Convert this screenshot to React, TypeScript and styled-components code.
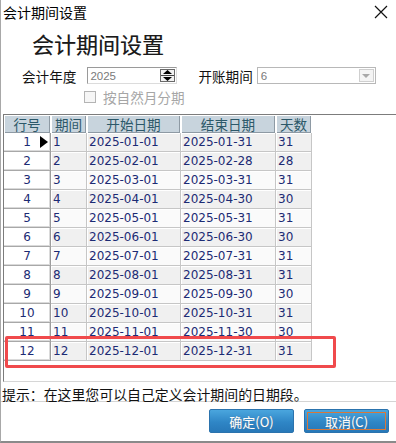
import React from "react";
import styled, { createGlobalStyle } from "styled-components";

const GlobalStyle = createGlobalStyle`
  html, body { margin: 0; padding: 0; background: #ffffff; }
  body { font-family: "Noto Sans CJK SC", "Noto Sans", sans-serif; }
  * { box-sizing: border-box; }
`;

const CJK = `"Noto Sans CJK SC", "Noto Sans", sans-serif`;
const NUM = `"DejaVu Sans", "Noto Sans CJK SC", sans-serif`;

const Window = styled.div`
  position: relative;
  width: 396px;
  height: 443px;
  background: #ffffff;
  border-left: 1px solid #a8a8a8;
  border-bottom: 2px solid #8a8a8a;
  display: flex;
  flex-direction: column;
  overflow: hidden;
`;

const TitleBar = styled.div`
  height: 24px;
  display: flex;
  align-items: center;
  justify-content: space-between;
  padding: 0 8px 0 2px;
  font-family: ${CJK};
  font-size: 14px;
  color: #000;
`;

const CloseIcon = () => (
  <svg width="14" height="14" viewBox="0 0 14 14">
    <path d="M1 1 L13 13 M13 1 L1 13" stroke="#111" strokeWidth="1.2" fill="none" />
  </svg>
);

const BigTitle = styled.div`
  margin: 6px 0 0 31px;
  height: 26px;
  line-height: 26px;
  font-family: ${CJK};
  font-size: 22px;
  color: #1a1a1a;
  text-shadow: 0.3px 0.3px 0 #9a9a9a;
`;

const FormRow = styled.div`
  margin-top: 10px;
  height: 19px;
  display: flex;
  align-items: center;
  padding-left: 21px;
`;

const Label = styled.span<{ $gap: number }>`
  font-family: ${CJK};
  font-size: 13.6px;
  color: #111;
  margin-right: ${(p) => p.$gap}px;
  white-space: nowrap;
`;

const SpinBox = styled.div`
  width: 90px;
  height: 17px;
  border: 1px solid #9a9a9a;
  border-right-color: #dcdcdc;
  border-bottom-color: #dcdcdc;
  background: #fff;
  display: flex;
  align-items: center;
  justify-content: space-between;
  padding: 0 1px 0 2px;
  margin-right: 21px;
`;

const FieldText = styled.span`
  font-family: "Liberation Sans", Arial, sans-serif;
  font-size: 11.5px;
  color: #7a7a7a;
`;

const SpinButtons = styled.div`
  width: 15px;
  height: 13px;
  border: 1px solid #6a6a6a;
  background: #f2f2f2;
  display: flex;
  flex-direction: column;
  align-items: center;
  justify-content: space-around;
`;

const SpinSplit = styled.div`
  width: 13px;
  height: 1px;
  background: #444;
`;

const Combo = styled.div`
  width: 119px;
  height: 17px;
  border: 1px solid #b8b8b8;
  background: #fff;
  display: flex;
  align-items: center;
  justify-content: space-between;
  padding: 0 1px 0 3px;
`;

const ComboButton = styled.div`
  width: 15px;
  height: 13px;
  border: 1px solid #cfcfcf;
  background: #f4f4f4;
  display: flex;
  align-items: center;
  justify-content: center;
`;

const CheckRow = styled.div`
  margin-top: 3px;
  height: 18px;
  display: flex;
  align-items: center;
  padding-left: 83px;
  gap: 7px;
`;

const CheckBox = styled.div`
  width: 12px;
  height: 12px;
  border: 1px solid #b4b4b4;
  background: #f6f6f6;
`;

const CheckLabel = styled.span`
  font-family: ${CJK};
  font-size: 13.6px;
  color: #a6a6a6;
`;

const GridBox = styled.div`
  margin: 8px 0 0 2px;
  height: 268px;
  border-top: 1px solid #7c7c7c;
  border-left: 1px solid #7c7c7c;
  border-bottom: 1px solid #d6d6d6;
  background: #fff;
  display: flex;
  flex-direction: column;
  flex-shrink: 0;
`;

const COLS = "47px 36px 94px 95px 36px";

const HeaderRow = styled.div`
  display: grid;
  grid-template-columns: ${COLS};
  height: 18px;
`;

const HeaderCell = styled.div`
  background: #c8d4dd;
  box-shadow: inset 1px 1px 0 #ffffff, inset -1px -1px 0 #8e9aa4;
  border-right: 1px solid #fff;
  display: flex;
  align-items: center;
  justify-content: center;
  font-family: ${CJK};
  font-size: 13.6px;
  line-height: 17px;
  color: #2c5869;
`;

const DataRow = styled.div`
  display: grid;
  grid-template-columns: ${COLS};
  height: 19px;
`;

const RowNo = styled.div`
  position: relative;
  background: #fff;
  border-right: 1px solid #9c9c9c;
  border-bottom: 1px solid #a8a8a8;
  box-shadow: inset -1px -1px 0 #dadada, inset 1px 1px 0 #ffffff;
  display: flex;
  align-items: center;
  justify-content: center;
  font-family: ${NUM};
  font-size: 12px;
  color: #1c2b74;
`;

const Pointer = styled.span`
  position: absolute;
  right: 2px;
  top: 3px;
  width: 0;
  height: 0;
  border-top: 6px solid transparent;
  border-bottom: 6px solid transparent;
  border-left: 8px solid #000;
`;

const Cell = styled.div<{ $shade: boolean }>`
  background: ${(p) => (p.$shade ? "#f0f0f0" : "#fafafa")};
  border-right: 1px solid #c6c6c6;
  border-bottom: 1px solid #c6c6c6;
  box-shadow: inset 1px 1px 0 #ffffff;
  display: flex;
  align-items: center;
  padding-left: 2px;
  font-family: ${NUM};
  font-size: 12px;
  color: #1c2b74;
  white-space: nowrap;
  overflow: hidden;
`;

const HintBar = styled.div`
  height: 20px;
  display: flex;
  align-items: flex-end;
  padding-left: 1px;
  border-bottom: 1px solid #d4d4d4;
  font-family: ${CJK};
  font-size: 13.9px;
  line-height: 14px;
  color: #111;
  white-space: nowrap;
`;

const Footer = styled.div`
  flex: 1;
  display: flex;
  justify-content: flex-end;
  align-items: flex-start;
  padding: 7px 7px 0 0;
  gap: 10px;
`;

const Button = styled.div<{ $focus?: boolean }>`
  position: relative;
  width: 85px;
  height: 24px;
  flex-shrink: 0;
  border-radius: 2px;
  border: 1px solid #2b73ad;
  background: linear-gradient(#4aa6de, #2f86c6 55%, #2778b8);
  display: flex;
  align-items: center;
  justify-content: center;
  font-family: ${CJK};
  font-size: 13px;
  color: #ffffff;
  text-shadow: 0 0 1px #6a7d8c;
  ${(p) =>
    p.$focus
      ? `&::after { content: ""; position: absolute; left: 2px; top: 2px; right: 2px; bottom: 2px; border: 1px solid #d8783a; }`
      : ""}
`;

const Highlight = styled.div`
  position: absolute;
  left: 4px;
  top: 336px;
  width: 331px;
  height: 32px;
  border: 3px solid #f04a4c;
  border-radius: 2px;
  pointer-events: none;
`;

const daysIn = [31, 28, 31, 30, 31, 30, 31, 31, 30, 31, 30, 31];
const pad = (n: number) => String(n).padStart(2, "0");
const rows = daysIn.map((d, i) => ({
  no: i + 1,
  start: `2025-${pad(i + 1)}-01`,
  end: `2025-${pad(i + 1)}-${d}`,
  days: d,
}));

export default function App() {
  return (
    <>
      <GlobalStyle />
      <Window>
        <TitleBar>
          <span>会计期间设置</span>
          <CloseIcon />
        </TitleBar>
        <BigTitle>会计期间设置</BigTitle>
        <FormRow>
          <Label $gap={11}>会计年度</Label>
          <SpinBox>
            <FieldText>2025</FieldText>
            <SpinButtons>
              <svg width="9" height="4" viewBox="0 0 9 4"><path d="M4.5 0 L9 4 L0 4 Z" fill="#000" /></svg>
              <SpinSplit />
              <svg width="9" height="4" viewBox="0 0 9 4"><path d="M0 0 L9 0 L4.5 4 Z" fill="#000" /></svg>
            </SpinButtons>
          </SpinBox>
          <Label $gap={4}>开账期间</Label>
          <Combo>
            <FieldText>6</FieldText>
            <ComboButton>
              <svg width="8" height="4" viewBox="0 0 8 4"><path d="M0 0 L8 0 L4 4 Z" fill="#a8a8a8" /></svg>
            </ComboButton>
          </Combo>
        </FormRow>
        <CheckRow>
          <CheckBox />
          <CheckLabel>按自然月分期</CheckLabel>
        </CheckRow>
        <GridBox>
          <HeaderRow>
            <HeaderCell>行号</HeaderCell>
            <HeaderCell>期间</HeaderCell>
            <HeaderCell>开始日期</HeaderCell>
            <HeaderCell>结束日期</HeaderCell>
            <HeaderCell>天数</HeaderCell>
          </HeaderRow>
          {rows.map((r) => {
            const shade = r.no === 1 || r.no % 2 === 0;
            return (
              <DataRow key={r.no}>
                <RowNo>
                  {r.no}
                  {r.no === 1 && <Pointer />}
                </RowNo>
                <Cell $shade={shade}>{r.no}</Cell>
                <Cell $shade={shade}>{r.start}</Cell>
                <Cell $shade={shade}>{r.end}</Cell>
                <Cell $shade={shade}>{r.days}</Cell>
              </DataRow>
            );
          })}
        </GridBox>
        <HintBar>提示：在这里您可以自己定义会计期间的日期段。</HintBar>
        <Footer>
          <Button>确定(O)</Button>
          <Button $focus>取消(C)</Button>
        </Footer>
        <Highlight />
      </Window>
    </>
  );
}
